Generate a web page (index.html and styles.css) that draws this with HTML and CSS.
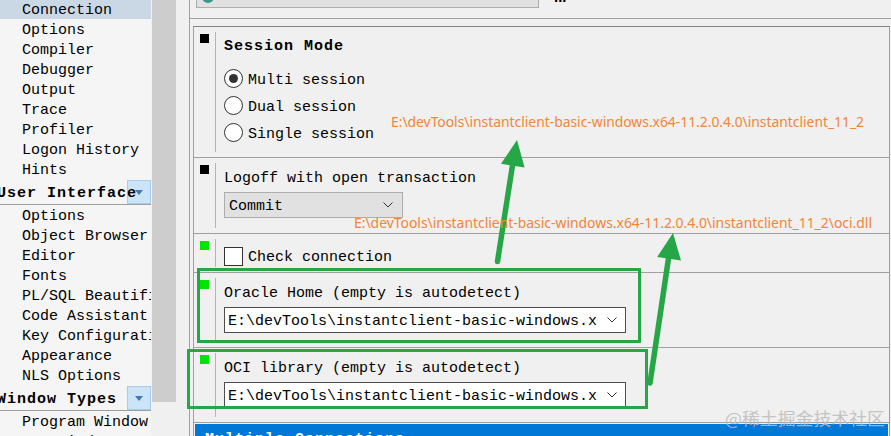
FILE: index.html
```html
<!DOCTYPE html>
<html lang="en">
<head>
<meta charset="utf-8">
<title>Preferences</title>
<link rel="stylesheet" href="styles.css">
</head>
<body>
<div class="app">
  <nav class="sidebar">
    <div class="tree">
      <div class="item sel">Connection</div>
      <div class="item">Options</div>
      <div class="item">Compiler</div>
      <div class="item">Debugger</div>
      <div class="item">Output</div>
      <div class="item">Trace</div>
      <div class="item">Profiler</div>
      <div class="item">Logon History</div>
      <div class="item">Hints</div>
      <div class="group"><span class="group-title">User Interface</span><span class="group-btn"><i class="tri"></i></span></div>
      <div class="item">Options</div>
      <div class="item">Object Browser</div>
      <div class="item">Editor</div>
      <div class="item">Fonts</div>
      <div class="item">PL/SQL Beautifier</div>
      <div class="item">Code Assistant</div>
      <div class="item">Key Configuration</div>
      <div class="item">Appearance</div>
      <div class="item">NLS Options</div>
      <div class="group"><span class="group-title">Window Types</span><span class="group-btn"><i class="tri"></i></span></div>
      <div class="item">Program Window</div>
      <div class="item">SQL Window</div>
    </div>
  </nav>
  <div class="vscroll"><div class="thumb"></div></div>
  <div class="spacer"></div>
  <main class="main">
    <div class="topbar">
      <div class="topcombo"><span class="topicon"></span></div>
      <span class="dots">...</span>
    </div>
    <div class="panel">
      <section class="sec sec-session">
        <div class="ind"><div class="sq"></div></div>
        <div class="sbody">
          <div class="title">Session Mode</div>
          <div class="radios">
            <div class="opt"><span class="radio on"></span><span class="txt">Multi session</span></div>
            <div class="opt"><span class="radio"></span><span class="txt">Dual session</span></div>
            <div class="opt"><span class="radio"></span><span class="txt">Single session</span></div>
          </div>
        </div>
      </section>
      <section class="sec sec-logoff">
        <div class="ind"><div class="sq"></div></div>
        <div class="sbody">
          <div class="label">Logoff with open transaction</div>
          <div class="combo combo-gray"><span class="combo-text">Commit</span>
            <svg class="chev" width="10" height="6" viewBox="0 0 10 6"><polyline points="0.5,0.5 5,5 9.5,0.5" fill="none" stroke="#333" stroke-width="1"/></svg>
          </div>
        </div>
      </section>
      <section class="sec sec-check">
        <div class="ind"><div class="sq on"></div></div>
        <div class="sbody">
          <div class="check-row"><span class="checkbox"></span><span class="txt">Check connection</span></div>
        </div>
      </section>
      <section class="sec sec-path">
        <div class="ind"><div class="sq on"></div></div>
        <div class="sbody">
          <div class="label">Oracle Home (empty is autodetect)</div>
          <div class="combo combo-white"><span class="combo-text">E:\devTools\instantclient-basic-windows.x64-11.2.0.4.0\instantclient_11_2</span>
            <svg class="chev" width="10" height="6" viewBox="0 0 10 6"><polyline points="0.5,0.5 5,5 9.5,0.5" fill="none" stroke="#333" stroke-width="1"/></svg>
          </div>
        </div>
      </section>
      <section class="sec sec-path">
        <div class="ind"><div class="sq on"></div></div>
        <div class="sbody">
          <div class="label">OCI library (empty is autodetect)</div>
          <div class="combo combo-white"><span class="combo-text">E:\devTools\instantclient-basic-windows.x64-11.2.0.4.0\instantclient_11_2\oci.dll</span>
            <svg class="chev" width="10" height="6" viewBox="0 0 10 6"><polyline points="0.5,0.5 5,5 9.5,0.5" fill="none" stroke="#333" stroke-width="1"/></svg>
          </div>
        </div>
      </section>
      <div class="bluebar">Multiple Connections</div>
    </div>
  </main>
</div>
<svg class="overlay" width="891" height="436" viewBox="0 0 891 436">
  <g fill="none" stroke="#27a648" stroke-width="3">
    <rect x="198.5" y="269.5" width="441" height="72"/>
    <rect x="188.5" y="350.5" width="458" height="57"/>
  </g>
  <g stroke="#27a648" stroke-width="5.5" stroke-linecap="round">
    <line x1="497.5" y1="261.5" x2="513" y2="162"/>
    <line x1="650" y1="383" x2="669" y2="255"/>
  </g>
  <g fill="#27a648">
    <polygon points="517,140 524.6,167.6 501,163.8"/>
    <polygon points="673,233 681,260.5 657.2,256.9"/>
  </g>
  <text class="note" x="391" y="127" textLength="473" lengthAdjust="spacingAndGlyphs">E:\devTools\instantclient-basic-windows.x64-11.2.0.4.0\instantclient_11_2</text>
  <text class="note" x="354" y="228" textLength="518" lengthAdjust="spacingAndGlyphs">E:\devTools\instantclient-basic-windows.x64-11.2.0.4.0\instantclient_11_2\oci.dll</text>
  <text class="wm" x="725" y="425" textLength="160" lengthAdjust="spacingAndGlyphs">@稀土掘金技术社区</text>
</svg>
</body>
</html>
```
FILE: styles.css
```css
* {
  box-sizing: border-box;
  margin: 0;
  padding: 0;
}

html,
body {
  width: 891px;
  height: 436px;
  overflow: hidden;
}

body {
  position: relative;
  background: #f0f0f0;
  color: #000;
  font-family: "Liberation Mono", "DejaVu Sans Mono", monospace;
  font-size: 15px;
}

.app {
  display: flex;
  height: 436px;
}

/* ---------- left tree ---------- */
.sidebar {
  width: 151px;
  flex: none;
  background: #f5f5f5;
  overflow: hidden;
}

.tree {
  margin-top: -1px;
}

.item {
  height: 20px;
  line-height: 24px;
  padding-left: 22px;
  white-space: nowrap;
}

.item.sel {
  background: #cad8e6;
}

.group {
  position: relative;
  height: 26px;
  border-bottom: 1px solid #a0a0a0;
}

.group-title {
  position: relative;
  z-index: 1;
  display: block;
  margin-left: -3px;
  padding-top: 2px;
  line-height: 25px;
  font-weight: bold;
  letter-spacing: 1px;
  white-space: nowrap;
}

.group-btn {
  position: absolute;
  top: 1px;
  right: 0;
  width: 24px;
  height: 24px;
  background: #cce4f7;
  border: 1px solid #a8cbea;
  display: flex;
  align-items: center;
  justify-content: center;
}

.tri {
  width: 0;
  height: 0;
  border-left: 4px solid transparent;
  border-right: 4px solid transparent;
  border-top: 5px solid #4178b3;
}

.vscroll {
  width: 25px;
  flex: none;
}

.thumb {
  margin-left: 1px;
  width: 24px;
  height: 402px;
  background: #cdcdcd;
}

.spacer {
  width: 13px;
  flex: none;
}

/* ---------- main area ---------- */
.main {
  flex: 1;
  min-width: 0;
  border-left: 1px solid #a0a0a0;
  display: flex;
  flex-direction: column;
}

.topbar {
  height: 19px;
  flex: none;
  border-bottom: 1px solid #a0a0a0;
  display: flex;
  align-items: flex-start;
}

.topcombo {
  margin-top: -19px;
  margin-left: 6px;
  width: 343px;
  height: 27px;
  background: #e1e1e1;
  border: 1px solid #adadad;
  padding: 9px 0 0 5px;
}

.topicon {
  display: block;
  width: 12px;
  height: 12px;
  border-radius: 50%;
  background: #3a9a8a;
}

.dots {
  margin-left: 15px;
  margin-top: -11px;
  font: bold 15px/15px "Liberation Sans", sans-serif;
}

.panel {
  flex: 1;
  min-height: 0;
  margin: 7px 1px 0 3px;
  border: 1px solid #a0a0a0;
  border-top-color: #828282;
  border-bottom: none;
  display: flex;
  flex-direction: column;
}

.sec {
  display: flex;
  flex: none;
  border-bottom: 1px solid #a0a0a0;
}

.sec-session { height: 131px; }
.sec-logoff { height: 76px; }
.sec-check { height: 39px; }
.sec-path { height: 75px; }

.ind {
  width: 21px;
  flex: none;
}

.sq {
  width: 9px;
  height: 9px;
  margin: 7px 0 0 6px;
  background: #000;
}

.sq.on {
  background: #00e400;
}

.sbody {
  flex: 1;
  min-width: 0;
  margin: 5px 0;
  border-left: 1px solid #b4b4b4;
  padding-left: 8px;
}

.title {
  padding-top: 5px;
  line-height: 20px;
  font-weight: bold;
  letter-spacing: 1px;
}

.label {
  padding-top: 6px;
  line-height: 20px;
  white-space: nowrap;
}

.radios {
  margin-top: 8px;
}

.opt {
  height: 27px;
  display: flex;
  align-items: center;
  white-space: nowrap;
}

.txt {
  padding-top: 3px;
}

.radio {
  width: 19px;
  height: 19px;
  margin-right: 5px;
  border: 1px solid #333;
  border-radius: 50%;
  background: #fff;
  display: flex;
  align-items: center;
  justify-content: center;
}

.radio.on::after {
  content: "";
  width: 9px;
  height: 9px;
  border-radius: 50%;
  background: #333;
}

.check-row {
  padding-top: 7px;
  display: flex;
  align-items: center;
  white-space: nowrap;
}

.checkbox {
  width: 19px;
  height: 19px;
  margin-right: 5px;
  border: 1px solid #333;
  background: #fff;
}

.combo {
  margin-top: 3px;
  height: 26px;
  display: flex;
  align-items: center;
  border: 1px solid #adadad;
}

.combo-gray {
  width: 179px;
  background: #e1e1e1;
  padding: 2px 9px 0 4px;
}

.combo-white {
  width: 402px;
  background: #fff;
  border-color: #4d4d4d;
  padding: 2px 8px 0 3px;
}

.combo-text {
  flex: 1;
  min-width: 0;
  overflow: hidden;
  white-space: nowrap;
}

.combo-white .combo-text {
  flex: none;
  width: 370px;
}

.chev {
  flex: none;
  margin-left: auto;
  margin-top: -2px;
}

.bluebar {
  flex: none;
  height: 30px;
  margin: 1px 1px 0 1px;
  padding: 3px 0 0 10px;
  background: #0078d7;
  color: #fff;
  font-weight: bold;
  letter-spacing: 1px;
  line-height: 26px;
  white-space: nowrap;
}

/* ---------- annotations ---------- */
.overlay {
  position: absolute;
  left: 0;
  top: 0;
  pointer-events: none;
}

.note {
  font-family: "Noto Sans", "Liberation Sans", sans-serif;
  font-size: 14.5px;
  fill: #f08637;
}

.wm {
  font-family: "Noto Sans CJK SC", sans-serif;
  font-size: 17px;
  fill: #bdbdbd;
  opacity: 0.85;
}
```
